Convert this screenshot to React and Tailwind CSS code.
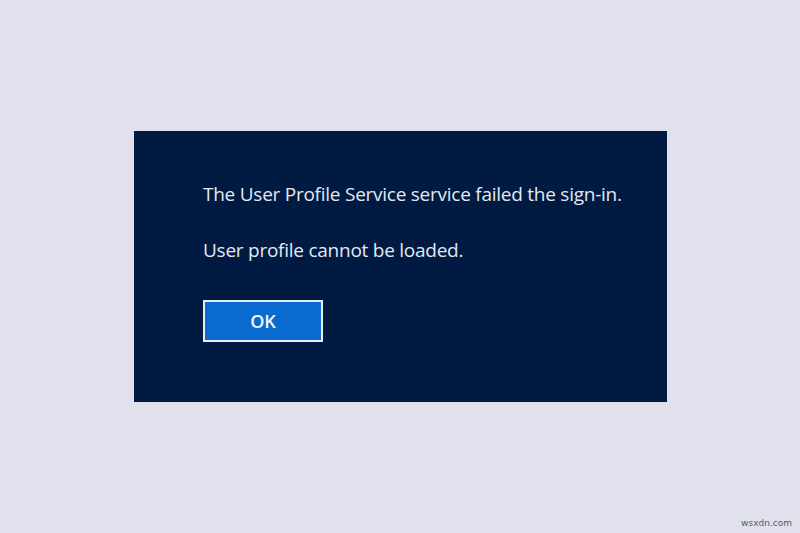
export default function App() {
  return (
    <div className="relative w-[800px] h-[533px] bg-[#e1e1ee] overflow-hidden" style={{ fontFamily: '"Open Sans", "Noto Sans", sans-serif' }}>
      <div className="pt-[131px] pl-[134px]">
        <div className="w-[533px] h-[271px] bg-[#001a42] pl-[69px] pt-[51px]">
          <p className="text-[19px] leading-[24px] text-[#e3e9f1] tracking-[-0.25px]">The User Profile Service service failed the sign-in.</p>
          <p className="mt-[32px] text-[19px] leading-[24px] text-[#e3e9f1] tracking-[-0.25px]">User profile cannot be loaded.</p>
          <button className="mt-[38px] w-[120px] h-[42px] border-2 border-[#e8eef6] bg-[#0a6bcf] text-[#f2f6fb] text-[18px] font-semibold flex items-center justify-center">OK</button>
        </div>
      </div>
      <div className="absolute right-[8px] bottom-[3px] text-[9px] text-[#555a66]" style={{ fontFamily: '"DejaVu Sans", sans-serif' }}>wsxdn.com</div>
    </div>
  );
}
